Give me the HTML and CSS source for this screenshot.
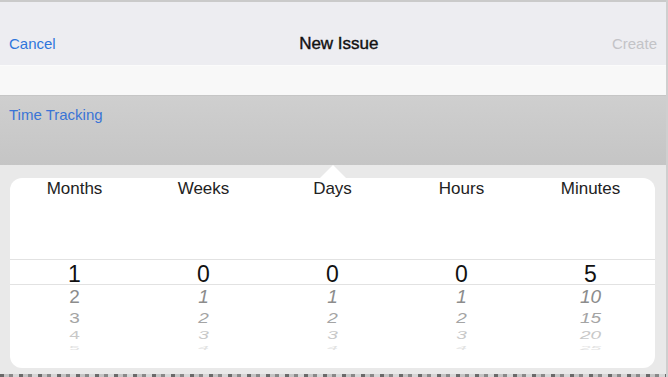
FILE: index.html
```html
<!DOCTYPE html>
<html lang="en">
<head>
    <meta charset="UTF-8">
    <meta name="viewport" content="width=device-width, initial-scale=1.0">
    <title>New Issue</title>
    <link rel="stylesheet" href="styles.css">
</head>
<body>

    <div class="screen">
        <div class="nav-bar">
            <span class="nav-btn">Cancel</span>
            <span class="nav-title">New Issue</span>
            <span class="nav-btn disabled">Create</span>
        </div>

        <div class="blank-row"></div>

        <div class="tracking-row">
            <span>Time Tracking</span>
        </div>

        <div class="backdrop">
            <div class="popover">
                <div class="wheel">
                    <div class="label">Months</div>
                    <div class="selected">1</div>
                    <div class="opt r1">2</div>
                    <div class="opt r2">3</div>
                    <div class="opt r3">4</div>
                    <div class="opt r4">5</div>
                </div>
                <div class="wheel tilt">
                    <div class="label">Weeks</div>
                    <div class="selected">0</div>
                    <div class="opt r1">1</div>
                    <div class="opt r2">2</div>
                    <div class="opt r3">3</div>
                    <div class="opt r4">4</div>
                </div>
                <div class="wheel tilt">
                    <div class="label">Days</div>
                    <div class="selected">0</div>
                    <div class="opt r1">1</div>
                    <div class="opt r2">2</div>
                    <div class="opt r3">3</div>
                    <div class="opt r4">4</div>
                </div>
                <div class="wheel tilt">
                    <div class="label">Hours</div>
                    <div class="selected">0</div>
                    <div class="opt r1">1</div>
                    <div class="opt r2">2</div>
                    <div class="opt r3">3</div>
                    <div class="opt r4">4</div>
                </div>
                <div class="wheel tilt">
                    <div class="label">Minutes</div>
                    <div class="selected">5</div>
                    <div class="opt r1">10</div>
                    <div class="opt r2">15</div>
                    <div class="opt r3">20</div>
                    <div class="opt r4">25</div>
                </div>
            </div>
        </div>

        <div class="bottom-strip"></div>
    </div>

</body>
</html>
```

FILE: styles.css
```css
* {
    box-sizing: border-box;
}
body {
    margin: 0;
    font-family: "Liberation Sans", Arial, sans-serif;
    background: #e8e8e8;
}
.screen {
    width: 668px;
    height: 377px;
    display: flex;
    flex-direction: column;
    overflow: hidden;
    border-right: 2px solid #cfcfcf;
}
.nav-bar {
    height: 65px;
    background: #ededf1;
    border-top: 2px solid #cacaca;
    display: flex;
    align-items: center;
    justify-content: space-between;
    padding: 20px 9px 0 9px;
}
.nav-btn {
    font-size: 15px;
    color: #2f76dc;
}
.nav-btn.disabled {
    color: #c3c3c7;
}
.nav-title {
    font-size: 17px;
    color: #111;
    margin-left: 10px;
    -webkit-text-stroke: 0.4px #111;
}
.blank-row {
    height: 30px;
    background: #f8f8f8;
    border-top: 1px solid #fbfbfb;
}
.tracking-row {
    height: 70px;
    background: linear-gradient(#cfcfcf, #c5c5c5);
    border-top: 1px solid #c6c6c6;
    padding: 10px 9px 0;
    font-size: 15px;
    color: #3a74d6;
}
.backdrop {
    flex: 1;
    background: #e9e9e9;
    padding: 13px 11px 6px 10px;
    display: flex;
}
.popover {
    position: relative;
    flex: 1;
    background: #fff;
    border-radius: 12px;
    display: grid;
    grid-template-columns: repeat(5, 1fr);
}
.popover::before {
    content: "";
    position: absolute;
    top: -13px;
    left: 310px;
    border-left: 13px solid transparent;
    border-right: 13px solid transparent;
    border-bottom: 13px solid #fff;
}
.wheel {
    display: flex;
    flex-direction: column;
    align-items: center;
}
.label {
    font-size: 17px;
    color: #222;
    height: 22px;
    line-height: 22px;
    margin-bottom: 59px;
}
.selected {
    align-self: stretch;
    text-align: center;
    height: 26px;
    line-height: 28px;
    font-size: 23px;
    color: #111;
    border-top: 1px solid #e2e2e2;
    border-bottom: 1px solid #e2e2e2;
}
.opt {
    text-align: center;
    color: #8c8c8c;
    font-size: 19px;
}
.r1 {
    height: 23px;
    line-height: 23px;
}
.r2 {
    height: 20px;
    line-height: 20px;
    color: #a4a4a4;
    transform: scaleY(0.8);
}
.r3 {
    height: 15px;
    line-height: 15px;
    color: #c8c8c8;
    transform: scaleY(0.55);
}
.r4 {
    height: 10px;
    line-height: 10px;
    color: #e2e2e2;
    transform: scaleY(0.3);
}
.tilt .opt {
    font-style: italic;
}
.bottom-strip {
    height: 3px;
    background: repeating-linear-gradient(90deg, #6a6a6a 0 4px, #c4c4c4 4px 9px, #888 9px 13px, #d6d6d6 13px 19px);
}
```
